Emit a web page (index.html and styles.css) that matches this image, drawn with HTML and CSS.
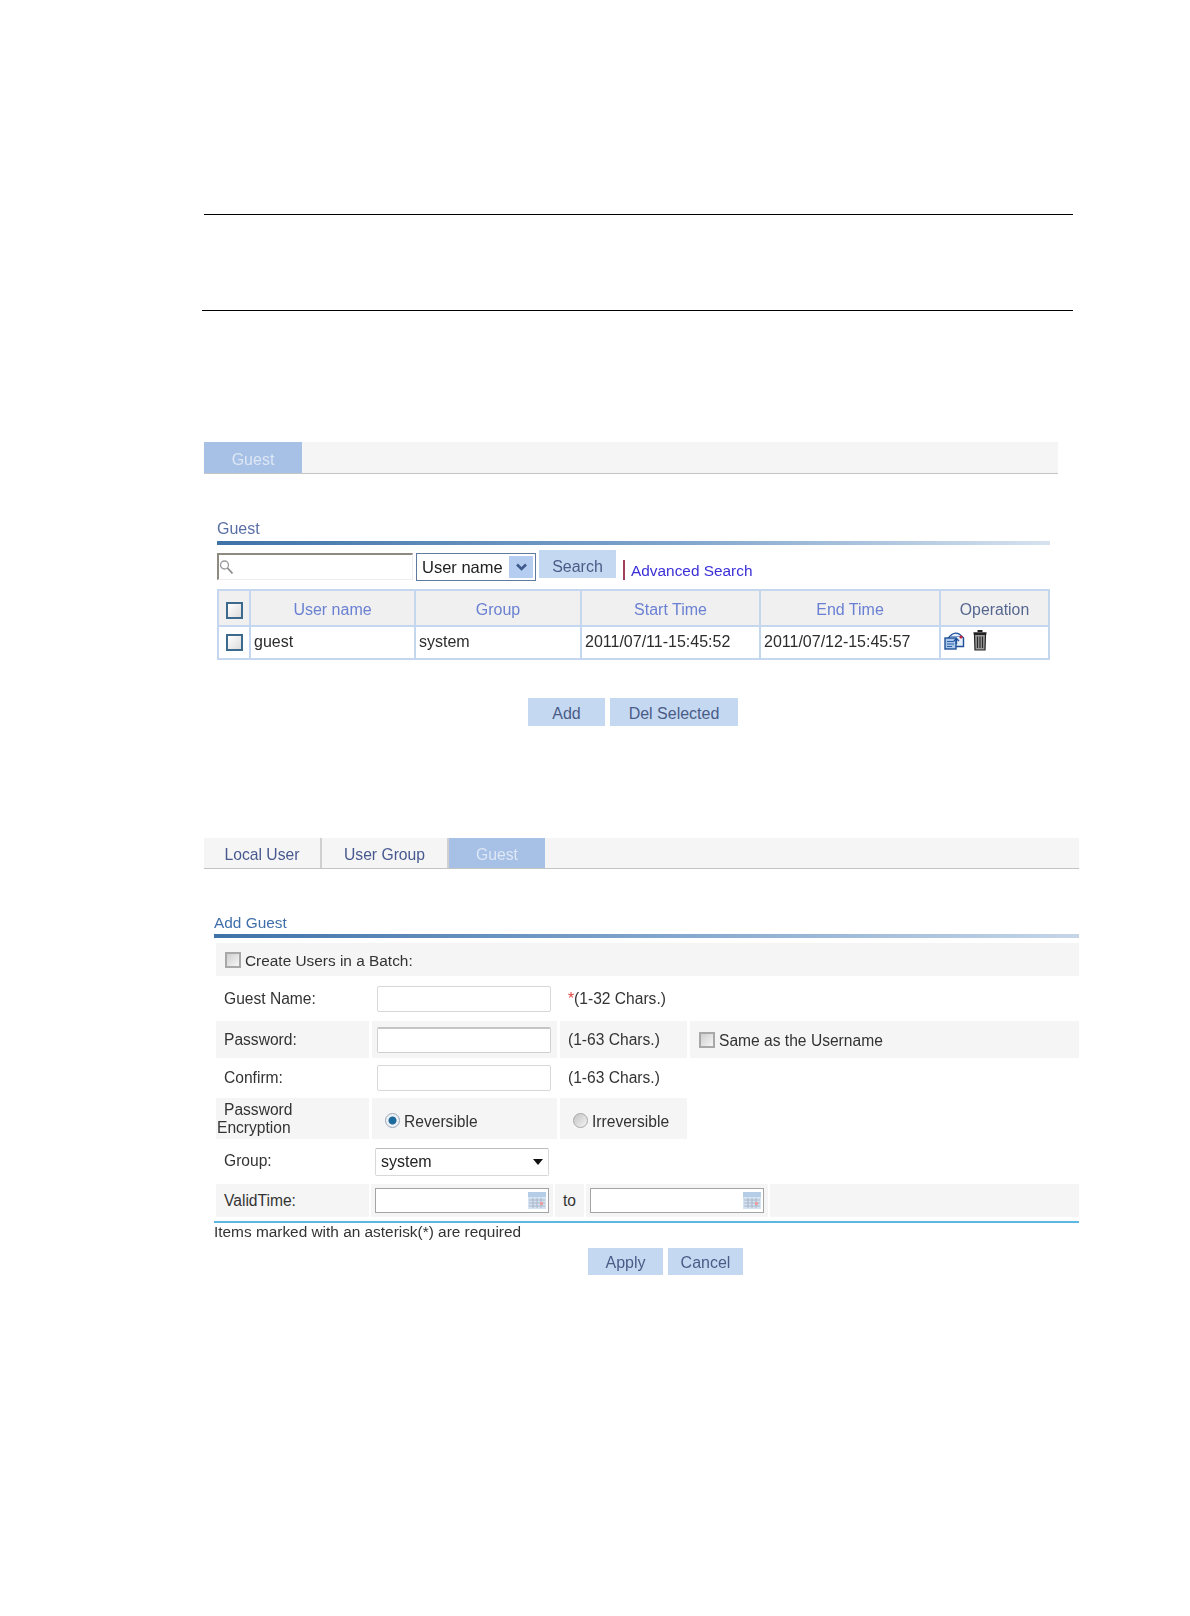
FILE: index.html
```html
<!DOCTYPE html>
<html lang="en">
<head>
<meta charset="utf-8">
<title>Guest</title>
<link rel="stylesheet" href="styles.css">
</head>
<body>
<main class="page">
  <div class="rules">
    <hr class="rule rule-top">
    <hr class="rule rule-bottom">
  </div>

  <section class="shot shot-list">
    <nav class="tabs tabs-list">
      <span class="tab tab-active tab-only">Guest</span>
    </nav>
    <div class="panel">
      <h2 class="title">Guest</h2>
      <div class="title-bar"></div>
      <div class="search-row">
        <div class="search-box">
          <svg class="search-icon" width="15" height="16" viewBox="0 0 15 16"><circle cx="5.500" cy="6" r="4" fill="none" stroke="#9a9a9a" stroke-width="1.300"/><path d="M8.500 9l5 5.500" stroke="#8a8a8a" stroke-width="1.800"/></svg>
        </div>
        <div class="search-select">
          <span>User name</span>
          <span class="chevron-box"><svg width="13" height="10" viewBox="0 0 13 10"><path d="M2 2.500l4.500 4.500 4.500-4.500" fill="none" stroke="#3d5a8c" stroke-width="2.600"/></svg></span>
        </div>
        <span class="btn btn-search">Search</span>
        <span class="sep"></span>
        <a class="adv-link">Advanced Search</a>
      </div>
      <table class="grid">
        <colgroup>
          <col class="c-check"><col class="c-user"><col class="c-group"><col class="c-start"><col class="c-end"><col>
        </colgroup>
        <thead>
          <tr>
            <th><span class="check check-blue"></span></th>
            <th>User name</th>
            <th>Group</th>
            <th>Start Time</th>
            <th>End Time</th>
            <th class="th-op">Operation</th>
          </tr>
        </thead>
        <tbody>
          <tr>
            <td class="td-check"><span class="check check-blue"></span></td>
            <td>guest</td>
            <td>system</td>
            <td>2011/07/11-15:45:52</td>
            <td>2011/07/12-15:45:57</td>
            <td class="td-op">
              <span class="op-icons">
                <svg width="21" height="20" viewBox="0 0 21 20"><path d="M4 8.500Q11.500 -2 19.500 8v8.500H4z" fill="#e4eef9" stroke="#1f4f96" stroke-width="1.400"/><path d="M7 6.500h9" stroke="#7f9fd0"/><rect x="1" y="8" width="11" height="11" fill="#a9c8ea" stroke="#1f4f96" stroke-width="1.400"/><path d="M3 11.500h7M3 14h7M3 16.500h5" stroke="#2e62a8"/><path d="M12.500 9v5M10 11l2.500-2.500L15 11" fill="none" stroke="#1f4f96" stroke-width="1.300"/><circle cx="17" cy="7" r="1.600" fill="#c8243c"/></svg>
                <svg width="14" height="21" viewBox="0 0 14 21"><path d="M4.500 1h5M.5 3.200h13" stroke="#222" stroke-width="2"/><path d="M1.500 4.500h11l-.5 15.500H2z" fill="#9a9a9a" stroke="#222" stroke-width="1.200"/><path d="M4.500 6.500v11.500M7 6.500v11.500M9.500 6.500v11.500" stroke="#2a2a2a" stroke-width="1.200"/></svg>
              </span>
            </td>
          </tr>
        </tbody>
      </table>
      <div class="actions actions-list">
        <span class="btn btn-add">Add</span>
        <span class="btn btn-del">Del Selected</span>
      </div>
    </div>
  </section>

  <section class="shot shot-form">
    <nav class="tabs tabs-form">
      <span class="tab tab-local">Local User</span>
      <span class="tab tab-group">User Group</span>
      <span class="tab tab-active tab-guest">Guest</span>
    </nav>
    <div class="form-panel">
      <h2 class="title title-form">Add Guest</h2>
      <div class="title-bar title-bar-form"></div>
      <div class="rows">
        <div class="row-batch shade">
          <span class="check check-gray"></span>
          <span class="nudge">Create Users in a Batch:</span>
        </div>
        <div class="row row-guest">
          <span class="label">Guest Name:</span>
          <span class="field"><span class="input"></span></span>
          <span class="hint"><span class="star">*</span>(1-32 Chars.)</span>
          <span></span>
        </div>
        <div class="row row-pw">
          <span class="label shade">Password:</span>
          <span class="field shade"><span class="input input-strong"></span></span>
          <span class="hint shade">(1-63 Chars.)</span>
          <span class="same shade"><span class="check check-gray"></span><span class="nudge">Same as the Username</span></span>
        </div>
        <div class="row row-confirm">
          <span class="label">Confirm:</span>
          <span class="field"><span class="input"></span></span>
          <span class="hint">(1-63 Chars.)</span>
          <span></span>
        </div>
        <div class="row row-enc">
          <span class="label label-enc shade">Password<br>Encryption</span>
          <span class="radio-cell shade"><span class="radio radio-on"></span><span class="radio-text">Reversible</span></span>
          <span class="radio-cell shade"><span class="radio"></span><span class="radio-text">Irreversible</span></span>
          <span></span>
        </div>
        <div class="row row-groupsel">
          <span class="label label-group">Group:</span>
          <span class="field field-sel"><span class="select"><span>system</span><svg width="10" height="6" viewBox="0 0 10 6"><path d="M0 0h10L5 6z" fill="#111"/></svg></span></span>
          <span></span>
          <span></span>
        </div>
        <div class="row-valid">
          <span class="label shade">ValidTime:</span>
          <span class="date-cell shade">
            <span class="date">
              <svg width="18" height="17" viewBox="0 0 18 17"><rect width="18" height="17" fill="#d4e2f2"/><rect width="18" height="5" fill="#b6cde8"/><path d="M1 8h16M1 11h16M1 14h16M5 6v10M9 6v10M13 6v10" stroke="#aab6c8"/><rect x="12" y="10" width="3" height="3" fill="#eba0a0"/></svg>
            </span>
          </span>
          <span class="to-cell shade">to</span>
          <span class="date-cell shade">
            <span class="date">
              <svg width="18" height="17" viewBox="0 0 18 17"><rect width="18" height="17" fill="#d4e2f2"/><rect width="18" height="5" fill="#b6cde8"/><path d="M1 8h16M1 11h16M1 14h16M5 6v10M9 6v10M13 6v10" stroke="#aab6c8"/><rect x="12" y="10" width="3" height="3" fill="#eba0a0"/></svg>
            </span>
          </span>
          <span class="shade"></span>
        </div>
      </div>
      <div class="form-line"></div>
      <p class="note">Items marked with an asterisk(*) are required</p>
      <div class="actions actions-form">
        <span class="btn btn-apply">Apply</span>
        <span class="btn btn-cancel">Cancel</span>
      </div>
    </div>
  </section>
</main>
</body>
</html>
```

FILE: styles.css
```css
* { box-sizing: border-box; }
html, body { margin: 0; padding: 0; background: #fff; }
body {
  font-family: "Liberation Sans", Arial, sans-serif;
  font-size: 15.6px;
  color: #333;
}
.page { width: 1190px; height: 1616px; overflow: hidden; padding-top: 214px; }

.rules { height: 228px; }
.rule { border: 0; height: 1px; background: #000; margin: 0; }
.rule-top { margin-left: 204px; width: 869px; }
.rule-bottom { margin-left: 202px; width: 871px; margin-top: 95px; }

.shot { margin-left: 204px; filter: blur(0.35px); }

/* tabs */
.tabs { display: flex; background: #f5f5f5; border-bottom: 1px solid #c4c4c4; font-size: 16px; }
.tabs-list { width: 854px; height: 32px; }
.tabs-form { width: 875px; height: 31px; font-size: 15.7px; }
.tab { display: flex; align-items: center; justify-content: center; color: #47598f; padding-top: 4px; }
.tab-active { background: #a6c0e6; color: #dde7f5; }
.tab-only { width: 98px; }
.tab-local { width: 118px; border-right: 2px solid #d0d0d0; }
.tab-group { width: 127px; border-right: 2px solid #d0d0d0; }
.tab-guest { width: 96px; }

/* list panel */
.panel { padding: 0 0 0 13px; width: 846px; }
.title { margin: 45px 0 0; font-weight: normal; font-size: 16px; line-height: 20px; color: #5a6ea6; }
.title-bar { height: 4px; margin-top: 2px; width: 833px; background: linear-gradient(90deg, #3f72a8, #7fa4cc 55%, #d6e2ef); }
.search-row { display: flex; margin-top: 5px; height: 31px; }
.search-box {
  width: 196px; height: 27px; margin-top: 3px;
  border-top: 2px solid #8e8a80; border-left: 2px solid #8e8a80;
  border-bottom: 1px solid #eee; border-right: 1px solid #eee;
  display: flex; align-items: center;
}
.search-select {
  width: 120px; height: 28px; margin: 3px 0 0 3px;
  border: 1px solid #5f7a9c; display: flex; align-items: center; justify-content: space-between;
  padding: 0 2px 0 5px; font-size: 16.5px; color: #222;
}
.chevron-box { width: 24px; height: 22px; background: #b5cdf0; display: flex; align-items: center; justify-content: center; }
.btn { display: flex; align-items: center; justify-content: center; background: #c5d8f2; color: #4a5c86; font-size: 16px; padding-top: 3px; }
.btn-search { width: 77px; height: 28px; margin-left: 3px; padding-top: 5px; }
.sep { width: 2px; height: 20px; background: #a0405a; margin: 10px 0 0 7px; }
.adv-link { margin: 11px 0 0 6px; line-height: 19px; color: #3b2fd8; font-size: 15.4px; }

/* table */
.grid {
  width: 833px; height: 70px; margin-top: 8px;
  table-layout: fixed; border-collapse: collapse;
  border: 2px solid #a9c4e6; background: #fff;
  font-size: 16px;
}
.c-check { width: 32px; }
.c-user { width: 165px; }
.c-group { width: 166px; }
.c-start { width: 179px; }
.c-end { width: 180px; }
.grid th, .grid td { border: 2px solid #c4d7ee; padding: 0; }
.grid th { height: 36px; padding-top: 3px; background: #f0f0f0; font-weight: normal; color: #6a80d2; text-align: center; }
.grid .td-check { text-align: center; }
.grid .th-op { color: #55668f; font-size: 15.8px; }
.grid td { height: 33px; padding: 0 0 2px 3px; color: #2c2c2c; white-space: nowrap; }
.grid .td-check { padding-left: 0; }
.grid .td-op { padding: 0 0 0 3px; vertical-align: top; }
.op-icons { display: flex; align-items: flex-start; gap: 8px; padding-top: 3px; }

.check { display: inline-block; vertical-align: middle; flex: none; }
.check-blue { width: 17px; height: 17px; border: 2px solid #3d6a8c; background: linear-gradient(135deg, #fff, #dcdcdc); }
.check-gray { width: 16px; height: 16px; border: 2px solid #a8a8a8; background: linear-gradient(135deg, #cfcfcf, #f6f6f6); }

.actions { display: flex; }
.actions-list { margin: 38px 0 0 311px; gap: 5px; }
.btn-add { width: 77px; height: 28px; }
.btn-del { width: 128px; height: 28px; }

/* form */
.shot-form { margin-top: 112px; }
.form-panel { padding-left: 10px; width: 875px; }
.title-form { margin-top: 45px; font-size: 15.4px; color: #3f6ea8; line-height: 18px; }
.title-bar-form { width: 865px; margin-top: 2px; height: 4px; background: linear-gradient(90deg, #3f72a8, #7fa4cc 50%, #c6d6e8); }
.rows { margin: 5px 0 0 2px; width: 863px; display: flex; flex-direction: column; gap: 3px; }
.shade { background: #f5f5f5; }
.nudge { padding-top: 2px; }
.row-batch { height: 33px; display: flex; align-items: center; gap: 4px; padding-left: 9px; font-size: 15.4px; }
.row { display: grid; grid-template-columns: 153px 185px 127px 1fr; column-gap: 3px; }
.row-guest { height: 39px; }
.row-pw { height: 37px; }
.row-confirm { height: 34px; }
.row-enc { height: 41px; }
.row-groupsel { height: 39px; }
.row-valid { height: 33px; display: grid; grid-template-columns: 153px 182px 29px 182px 1fr; column-gap: 2px; }
.label { display: flex; align-items: center; padding-left: 8px; color: #333; }
.label-enc { display: block; padding: 3px 0 0 1px; line-height: 18px; text-indent: 7px; }
.label-group { padding-bottom: 2px; }
.field { display: flex; align-items: center; padding-left: 5px; }
.input { display: block; width: 174px; height: 26px; border: 1px solid #d8d8d8; border-radius: 2px; background: #fff; }
.input-strong { border-color: #d0d0d0; border-top: 2px solid #c4c4c4; }
.hint { display: flex; align-items: center; white-space: nowrap; padding-left: 8px; }
.star { color: #e0443e; }
.same { display: flex; align-items: center; gap: 4px; padding-left: 9px; }
.radio-cell { display: flex; align-items: center; gap: 4px; padding-left: 13px; }
.radio-text { padding-top: 6px; }
.radio { display: block; flex: none; margin-top: 4px; width: 15px; height: 15px; border-radius: 50%; border: 1px solid #a8a8a8; background: linear-gradient(135deg, #c4c4c4, #f4f4f4); }
.radio-on { background: radial-gradient(circle, #1d6a9c 0 3.5px, #eef2f6 4.5px); border-color: #9aa8b8; }
.field-sel { padding-left: 3px; }
.select {
  width: 174px; height: 28px; border: 1px solid #d8d8d8; border-top-color: #bbb; border-radius: 2px;
  display: flex; align-items: center; justify-content: space-between; padding: 0 5px;
  font-size: 16px; color: #222; background: #fff;
}
.date-cell { display: flex; align-items: center; padding-left: 4px; }
.date {
  width: 174px; height: 25px; border: 1px solid #a4a4a4; background: #fff;
  display: flex; align-items: center; justify-content: flex-end; padding-right: 2px;
}
.to-cell { display: flex; align-items: center; justify-content: center; }
.form-line { height: 2px; width: 865px; margin-top: 4px; background: #5db7e4; }
.note { margin: 0; line-height: 18px; color: #333; font-size: 15.4px; }
.actions-form { margin: 7px 0 0 374px; gap: 5px; }
.btn-apply, .btn-cancel { width: 75px; height: 27px; padding-top: 2px; }
```
